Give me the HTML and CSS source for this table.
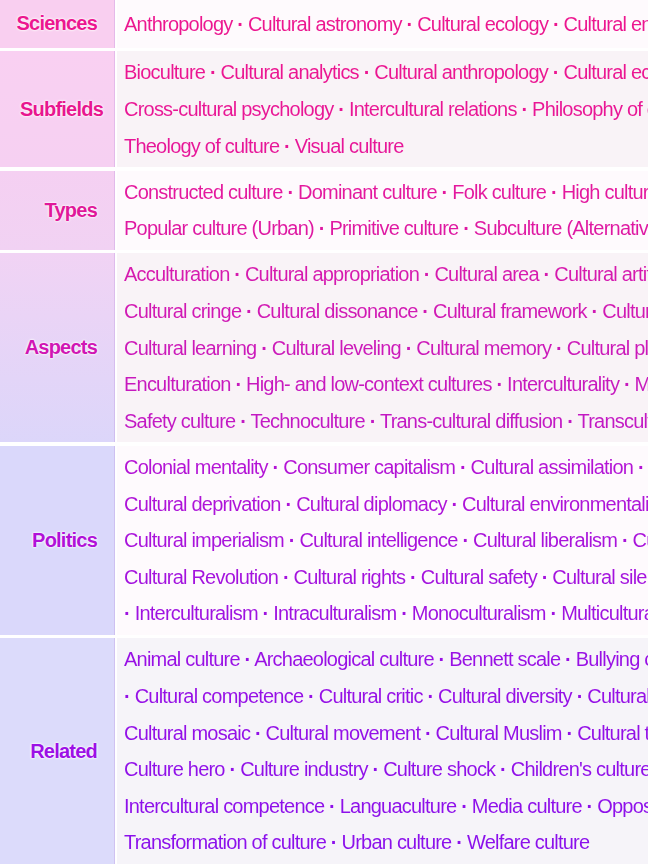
FILE: index.html
```html
<!DOCTYPE html>
<html lang="en">
<head>
<meta charset="utf-8">
<title>Culture navbox</title>
<link rel="stylesheet" href="styles.css">
</head>
<body>
<div class="nav">
  <div class="lab lab-sci first">Sciences</div>
  <div class="cell odd first"><div class="lines l-sci">
    <div>Anthropology <b>·</b> Cultural astronomy <b>·</b> Cultural ecology <b>·</b> Cultural entomology <b>·</b> Cultural geography</div>
  </div></div>

  <div class="lab lab-sub">Subfields</div>
  <div class="cell even"><div class="lines l-sub">
    <div>Bioculture <b>·</b> Cultural analytics <b>·</b> Cultural anthropology <b>·</b> Cultural economics <b>·</b> Cultural history</div>
    <div>Cross-cultural psychology <b>·</b> Intercultural relations <b>·</b> Philosophy of culture <b>·</b> Sociology of culture</div>
    <div>Theology of culture <b>·</b> Visual culture</div>
  </div></div>

  <div class="lab lab-typ">Types</div>
  <div class="cell odd"><div class="lines l-typ">
    <div>Constructed culture <b>·</b> Dominant culture <b>·</b> Folk culture <b>·</b> High culture <b>·</b> Low culture</div>
    <div>Popular culture (Urban) <b>·</b> Primitive culture <b>·</b> Subculture (Alternative culture)</div>
  </div></div>

  <div class="lab lab-asp">Aspects</div>
  <div class="cell even"><div class="lines l-asp">
    <div>Acculturation <b>·</b> Cultural appropriation <b>·</b> Cultural area <b>·</b> Cultural artifact <b>·</b> Cultural capital</div>
    <div>Cultural cringe <b>·</b> Cultural dissonance <b>·</b> Cultural framework <b>·</b> Cultural hegemony</div>
    <div>Cultural learning <b>·</b> Cultural leveling <b>·</b> Cultural memory <b>·</b> Cultural pluralism</div>
    <div>Enculturation <b>·</b> High- and low-context cultures <b>·</b> Interculturality <b>·</b> Multiculturalism</div>
    <div>Safety culture <b>·</b> Technoculture <b>·</b> Trans-cultural diffusion <b>·</b> Transculturation</div>
  </div></div>

  <div class="lab lab-pol">Politics</div>
  <div class="cell odd"><div class="lines l-pol">
    <div>Colonial mentality <b>·</b> Consumer capitalism <b>·</b> Cultural assimilation <b>·</b> Cultural conflict</div>
    <div>Cultural deprivation <b>·</b> Cultural diplomacy <b>·</b> Cultural environmentalism</div>
    <div>Cultural imperialism <b>·</b> Cultural intelligence <b>·</b> Cultural liberalism <b>·</b> Cultural policy</div>
    <div>Cultural Revolution <b>·</b> Cultural rights <b>·</b> Cultural safety <b>·</b> Cultural silence</div>
    <div><b>·</b> Interculturalism <b>·</b> Intraculturalism <b>·</b> Monoculturalism <b>·</b> Multiculturalism</div>
  </div></div>

  <div class="lab lab-rel">Related</div>
  <div class="cell even"><div class="lines l-rel">
    <div>Animal culture <b>·</b> Archaeological culture <b>·</b> Bennett scale <b>·</b> Bullying culture</div>
    <div><b>·</b> Cultural competence <b>·</b> Cultural critic <b>·</b> Cultural diversity <b>·</b> Cultural heritage</div>
    <div>Cultural mosaic <b>·</b> Cultural movement <b>·</b> Cultural Muslim <b>·</b> Cultural tourism</div>
    <div>Culture hero <b>·</b> Culture industry <b>·</b> Culture shock <b>·</b> Children's culture</div>
    <div>Intercultural competence <b>·</b> Languaculture <b>·</b> Media culture <b>·</b> Oppositional culture</div>
    <div>Transformation of culture <b>·</b> Urban culture <b>·</b> Welfare culture</div>
  </div></div>
</div>
</body>
</html>
```

FILE: styles.css
```css
html, body {
  margin: 0;
  padding: 0;
  background: #ffffff;
  overflow: hidden;
}

body {
  width: 648px;
  height: 864px;
  font-family: "Liberation Sans", Arial, sans-serif;
  font-size: 20px;
  letter-spacing: -0.78px;
}

.nav {
  display: grid;
  grid-template-columns: 115px 1500px;
  column-gap: 2px;
  row-gap: 3.5px;
}

.lab {
  display: flex;
  align-items: center;
  justify-content: flex-end;
  padding-right: 18px;
  font-weight: bold;
  box-shadow: inset -1px 0 0 rgba(170, 120, 210, 0.25);
  text-shadow: 0 0 1px #fff, 0 0 2px #fff, 0 0 3px #fff;
}

.lab-sci { background: #f9cff0; color: #ec1690; }
.lab-sub { background: linear-gradient(#f9d0f2, #f6d0f2); color: #e8168f; padding-right: 12px; }
.lab-typ { background: linear-gradient(#f5d0f2, #f1d2f3); color: #e0189a; }
.lab-asp { background: linear-gradient(#f1d3f4, #dcd6fa); color: #d016b4; }
.lab-pol { background: #dad8fb; color: #b012d8; }
.lab-rel { background: #dcdbfb; color: #9c10e6; }

.cell {
  padding: 3px 0 3px 7px;
  white-space: nowrap;
}
.first { padding-top: 5.7px; padding-bottom: 5.7px; }

.odd { background: #fefafd; }
.even { background: #f9f3f7; }
.cell.even:last-child { background: #f6f4f9; }

.lines {
  line-height: 36.6px;
  -webkit-background-clip: text;
  background-clip: text;
  color: transparent;
}
.lines > div { width: max-content; }
.lines b { font-weight: bold; }

.l-sci { background-image: linear-gradient(#ee1690, #ea168f); }
.l-sub { background-image: linear-gradient(#ec1690, #e6169a); }
.l-typ { background-image: linear-gradient(#e6189c, #dc18a4); }
.l-asp { background-image: linear-gradient(#d81aac, #c018c6); }
.l-pol { background-image: linear-gradient(#b614d4, #9c12e2); }
.l-rel { background-image: linear-gradient(#9a10e4, #8a10ec); }
```
